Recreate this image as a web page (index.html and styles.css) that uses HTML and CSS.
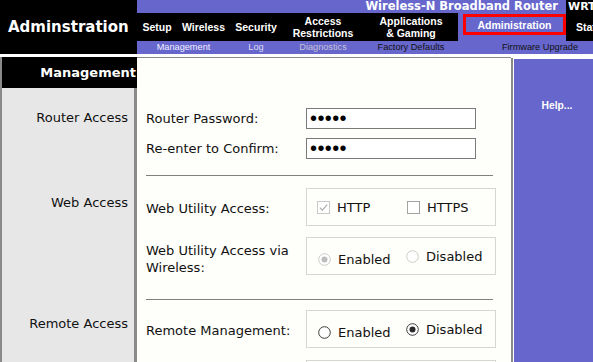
FILE: index.html
```html
<!DOCTYPE html>
<html lang="en">
<head>
    <meta charset="UTF-8">
    <title>Administration - Management</title>
    <link rel="stylesheet" href="styles.css">
</head>
<body>
    <div class="header">
        <div class="brand">Adminstration</div>
        <div class="topbar">
            <div class="strip">
                <div class="product">Wireless-N Broadband Router</div>
                <div class="model">WRT160N</div>
            </div>
            <div class="menu">
                <div class="menu-item w-setup">Setup</div>
                <div class="menu-item w-wireless">Wireless</div>
                <div class="menu-item w-security">Security</div>
                <div class="menu-item w-access">Access<br>Restrictions</div>
                <div class="menu-item w-apps">Applications<br>&amp; Gaming</div>
                <div class="menu-item w-admin is-active"><span class="tab-box">Administration</span></div>
                <div class="menu-item w-status">Status</div>
            </div>
            <div class="submenu">
                <div class="sub-item w-sub1 is-current">Management</div>
                <div class="sub-item w-security is-light">Log</div>
                <div class="sub-item w-access is-dim">Diagnostics</div>
                <div class="sub-item w-apps">Factory Defaults</div>
                <div class="sub-item w-sub5">Firmware Upgrade</div>
            </div>
        </div>
    </div>

    <div class="main">
        <div class="sheet">
            <div class="row">
                <div class="side side-head">Management</div>
                <div class="pane pane-top"></div>
            </div>

            <div class="row">
                <div class="side side-router">Router Access</div>
                <div class="pane sec-router">
                    <div class="field">
                        <div class="field-label">Router Password:</div>
                        <input class="pwd" type="password" value="admin">
                    </div>
                    <div class="field field-next">
                        <div class="field-label">Re-enter to Confirm:</div>
                        <input class="pwd" type="password" value="admin">
                    </div>
                    <div class="rule rule-router"></div>
                </div>
            </div>

            <div class="row">
                <div class="side side-web">Web Access</div>
                <div class="pane">
                    <div class="field field-box gap-12">
                        <div class="field-label">Web Utility Access:</div>
                        <div class="choices">
                            <span class="opt">
                                <svg width="13" height="13" viewBox="0 0 13 13"><rect x="0.5" y="0.5" width="12" height="12" fill="#fff" stroke="#c9c9c9"/><path d="M2.8 6.6 L5.3 9.1 L10.2 3.6" fill="none" stroke="#a8a8a8" stroke-width="1.1"/></svg>
                                HTTP
                            </span>
                            <span class="opt">
                                <svg width="13" height="13" viewBox="0 0 13 13"><rect x="0.5" y="0.5" width="12" height="12" fill="#fff" stroke="#a3a3a3"/></svg>
                                HTTPS
                            </span>
                        </div>
                    </div>
                    <div class="field field-box gap-10">
                        <div class="field-label field-label-wrap">Web Utility Access via Wireless:</div>
                        <div class="choices choices-radio">
                            <span class="opt opt-low">
                                <svg width="13" height="13" viewBox="0 0 13 13"><circle cx="6.5" cy="6.5" r="5.8" fill="#fff" stroke="#cacaca"/><circle cx="6.5" cy="6.5" r="3" fill="#bdbdbd"/></svg>
                                Enabled
                            </span>
                            <span class="opt">
                                <svg width="13" height="13" viewBox="0 0 13 13"><circle cx="6.5" cy="6.5" r="5.8" fill="#fff" stroke="#cacaca"/></svg>
                                Disabled
                            </span>
                        </div>
                    </div>
                    <div class="rule rule-web"></div>
                </div>
            </div>

            <div class="row">
                <div class="side side-remote">Remote Access</div>
                <div class="pane">
                    <div class="field field-box gap-10">
                        <div class="field-label">Remote Management:</div>
                        <div class="choices choices-radio">
                            <span class="opt opt-low">
                                <svg width="13" height="13" viewBox="0 0 13 13"><circle cx="6.5" cy="6.5" r="5.8" fill="#fff" stroke="#3c3c3c"/></svg>
                                Enabled
                            </span>
                            <span class="opt">
                                <svg width="13" height="13" viewBox="0 0 13 13"><circle cx="6.5" cy="6.5" r="5.8" fill="#fff" stroke="#3c3c3c"/><circle cx="6.5" cy="6.5" r="3" fill="#2a2a2a"/></svg>
                                Disabled
                            </span>
                        </div>
                    </div>
                    <div class="field field-box gap-12">
                        <div class="field-label"></div>
                        <div class="choices"></div>
                    </div>
                </div>
            </div>
        </div>

        <div class="help">
            <div class="help-inner">Help...</div>
        </div>
    </div>
</body>
</html>
```

FILE: styles.css
```css
html {
    overflow: hidden;
    background: #fff;
}
body {
    margin: 0;
    width: 600px;
    font-family: "DejaVu Sans", Verdana, sans-serif;
    font-size: 13px;
    color: #111;
    background: #fff;
}

/* header */
.header {
    display: flex;
    height: 54px;
}
.brand {
    width: 137px;
    flex: none;
    box-sizing: border-box;
    padding-left: 8px;
    background: #000;
    color: #fff;
    font-weight: bold;
    font-size: 15px;
    display: flex;
    align-items: center;
}
.topbar {
    flex: 1;
    display: flex;
    flex-direction: column;
    min-width: 0;
}
.strip {
    display: flex;
    height: 13px;
    background: #6666cc;
}
.product {
    flex: 1;
    text-align: right;
    padding-right: 8px;
    color: #fff;
    font-weight: bold;
    font-size: 11.5px;
    line-height: 13px;
    white-space: nowrap;
}
.model {
    width: 32px;
    padding-left: 2px;
    background: #000;
    color: #fff;
    font-weight: bold;
    font-size: 11px;
    line-height: 13px;
    overflow: hidden;
    white-space: nowrap;
}
.menu {
    display: flex;
    height: 28px;
    background: #000;
    color: #fff;
    font-family: "Liberation Sans", Arial, sans-serif;
    font-size: 10.5px;
    font-weight: bold;
}
.menu-item {
    flex: none;
    display: flex;
    align-items: center;
    justify-content: center;
    text-align: center;
    line-height: 12.5px;
    white-space: nowrap;
}
.w-setup { width: 40px; }
.w-wireless { width: 53px; }
.w-security { width: 52px; }
.w-access { width: 82px; }
.w-apps { width: 94px; }
.w-admin { width: 108px; }
.w-status {
    flex: 1;
    justify-content: flex-start;
    padding-left: 10px;
}
.menu-item.is-active {
    background: #6666cc;
    align-items: flex-start;
    justify-content: flex-start;
}
.tab-box {
    box-sizing: border-box;
    width: 103px;
    height: 21px;
    margin: 1px 0 0 5px;
    padding-top: 2px;
    border: 3px solid #ff0000;
    display: flex;
    align-items: center;
    justify-content: center;
}
.submenu {
    display: flex;
    height: 13px;
    background: #6666cc;
    color: #111;
    font-family: "Liberation Sans", Arial, sans-serif;
    font-size: 9.2px;
    line-height: 13px;
}
.sub-item {
    flex: none;
    text-align: center;
    white-space: nowrap;
}
.w-sub1 { width: 93px; }
.w-sub5 { width: 164px; }
.sub-item.is-current { color: #f0f0ff; }
.sub-item.is-light { color: #dcdcf4; }
.sub-item.is-dim { color: #c3c3d6; }

/* body */
.main {
    display: flex;
    margin-top: 3px;
}
.sheet {
    width: 511px;
    flex: none;
}
.row {
    display: flex;
}
.side {
    width: 137px;
    flex: none;
    box-sizing: border-box;
    background: #e7e7e7;
    border-left: 2px solid #8a8a8a;
    border-right: 3px solid #8a8a8a;
    padding-right: 6px;
    text-align: right;
    line-height: 16px;
    white-space: nowrap;
}
.side-head {
    height: 31px;
    line-height: 31px;
    padding-right: 1px;
    border-right: none;
    background: #000;
    color: #fff;
    font-weight: bold;
    overflow: hidden;
}
.side-router { padding-top: 22px; }
.side-web { padding-top: 19px; }
.side-remote { padding-top: 16px; }

.pane {
    width: 374px;
    flex: none;
    box-sizing: border-box;
    padding-left: 9px;
    padding-bottom: 20px;
    background: #fefefa;
}
.pane-top {
    padding-bottom: 0;
    border-top: 1px solid #8a8a8a;
}
.sec-router {
    padding-top: 20px;
    padding-bottom: 0;
}
.rule {
    margin-right: 18px;
    border-top: 1px solid #808080;
}
.rule-router { margin-top: 16px; }
.rule-web { margin-top: 23px; }
.rule-web:last-child { margin-bottom: -20px; }

.field {
    display: flex;
    align-items: center;
}
.field-next { margin-top: 9px; }
.gap-10 { margin-top: 10px; }
.gap-12 { margin-top: 12px; }
.field-label {
    width: 160px;
    flex: none;
}
.field-box .field-label {
    padding-top: 3px;
}
.field-box .field-label-wrap {
    line-height: 17px;
    padding-top: 6px;
}
.pwd {
    box-sizing: border-box;
    width: 170px;
    height: 21px;
    margin: 0;
    padding: 0 3px;
    border: 1px solid #7a7a7a;
    background: #fff;
    color: #000;
    font-family: "Liberation Sans", Arial, sans-serif;
    font-size: 20px;
    letter-spacing: 0.4px;
    outline: none;
}
.choices {
    box-sizing: border-box;
    width: 190px;
    height: 38px;
    padding-left: 10px;
    border: 1px solid #d6d6d6;
    display: flex;
    align-items: center;
}
.choices-radio {
    padding-left: 11px;
}
.opt {
    flex: none;
    width: 90px;
    display: flex;
    align-items: center;
    gap: 7px;
}
.choices-radio .opt {
    width: 88px;
}
.opt svg {
    flex: none;
    display: block;
}
.opt-low {
    margin-top: 6px;
}

/* help column */
.help {
    flex: 1;
    display: flex;
    margin-top: 1px;
    padding: 1px 0 0 1px;
    border-left: 2px solid #8a8a8a;
    background: #fff;
}
.help-inner {
    flex: 1;
    padding-top: 41px;
    background: #6666cc;
    color: #fff;
    text-align: center;
    font-family: "Liberation Sans", Arial, sans-serif;
    font-size: 10.3px;
    font-weight: bold;
    line-height: 12px;
}
```
